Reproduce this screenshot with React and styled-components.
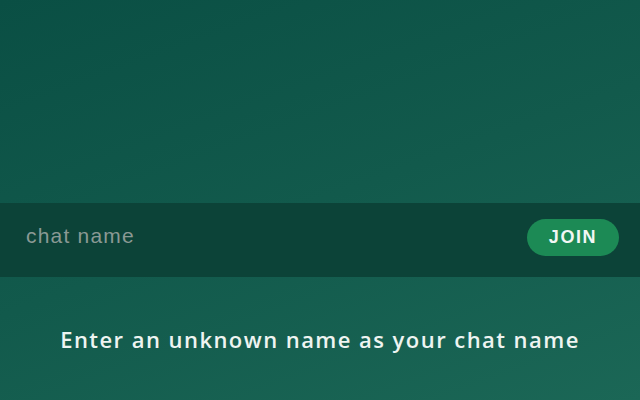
import React from "react";
import styled, { createGlobalStyle } from "styled-components";

const Global = createGlobalStyle`
  html, body { margin: 0; padding: 0; }
  body { width: 640px; height: 400px; overflow: hidden; }
  * { box-sizing: border-box; }
`;

const Page = styled.div`
  width: 640px;
  height: 400px;
  display: flex;
  flex-direction: column;
  padding-top: 203px;
  background: linear-gradient(160deg, #0a4f44 0%, #125a4c 50%, #1b6756 100%);
`;

const Bar = styled.form`
  height: 74px;
  display: flex;
  align-items: center;
  justify-content: space-between;
  padding: 0 21px 0 26px;
  background: #0c4338;
`;

const NameInput = styled.input`
  flex: 1;
  border: none;
  outline: none;
  background: transparent;
  font-family: "Liberation Sans", Arial, sans-serif;
  font-size: 21px;
  letter-spacing: 1.2px;
  color: #e0e8e4;
  padding: 0;
  margin-top: -8px;
  &::placeholder { color: #8a9994; }
`;

const JoinButton = styled.button`
  width: 92px;
  height: 37px;
  margin-top: -6px;
  border: none;
  border-radius: 19px;
  background: #1c8a55;
  color: #f2f7f4;
  font-family: "Liberation Sans", Arial, sans-serif;
  font-weight: bold;
  font-size: 18px;
  letter-spacing: 1.6px;
  cursor: pointer;
`;

const Hint = styled.p`
  margin: 47px 0 0;
  text-align: center;
  font-family: "Open Sans", sans-serif;
  font-weight: 600;
  font-size: 22px;
  letter-spacing: 1.45px;
  color: #eef4f1;
`;

export default function App() {
  return (
    <>
      <Global />
      <Page>
        <Bar onSubmit={(e) => e.preventDefault()}>
          <NameInput placeholder="chat name" />
          <JoinButton type="submit">JOIN</JoinButton>
        </Bar>
        <Hint>Enter an unknown name as your chat name</Hint>
      </Page>
    </>
  );
}
